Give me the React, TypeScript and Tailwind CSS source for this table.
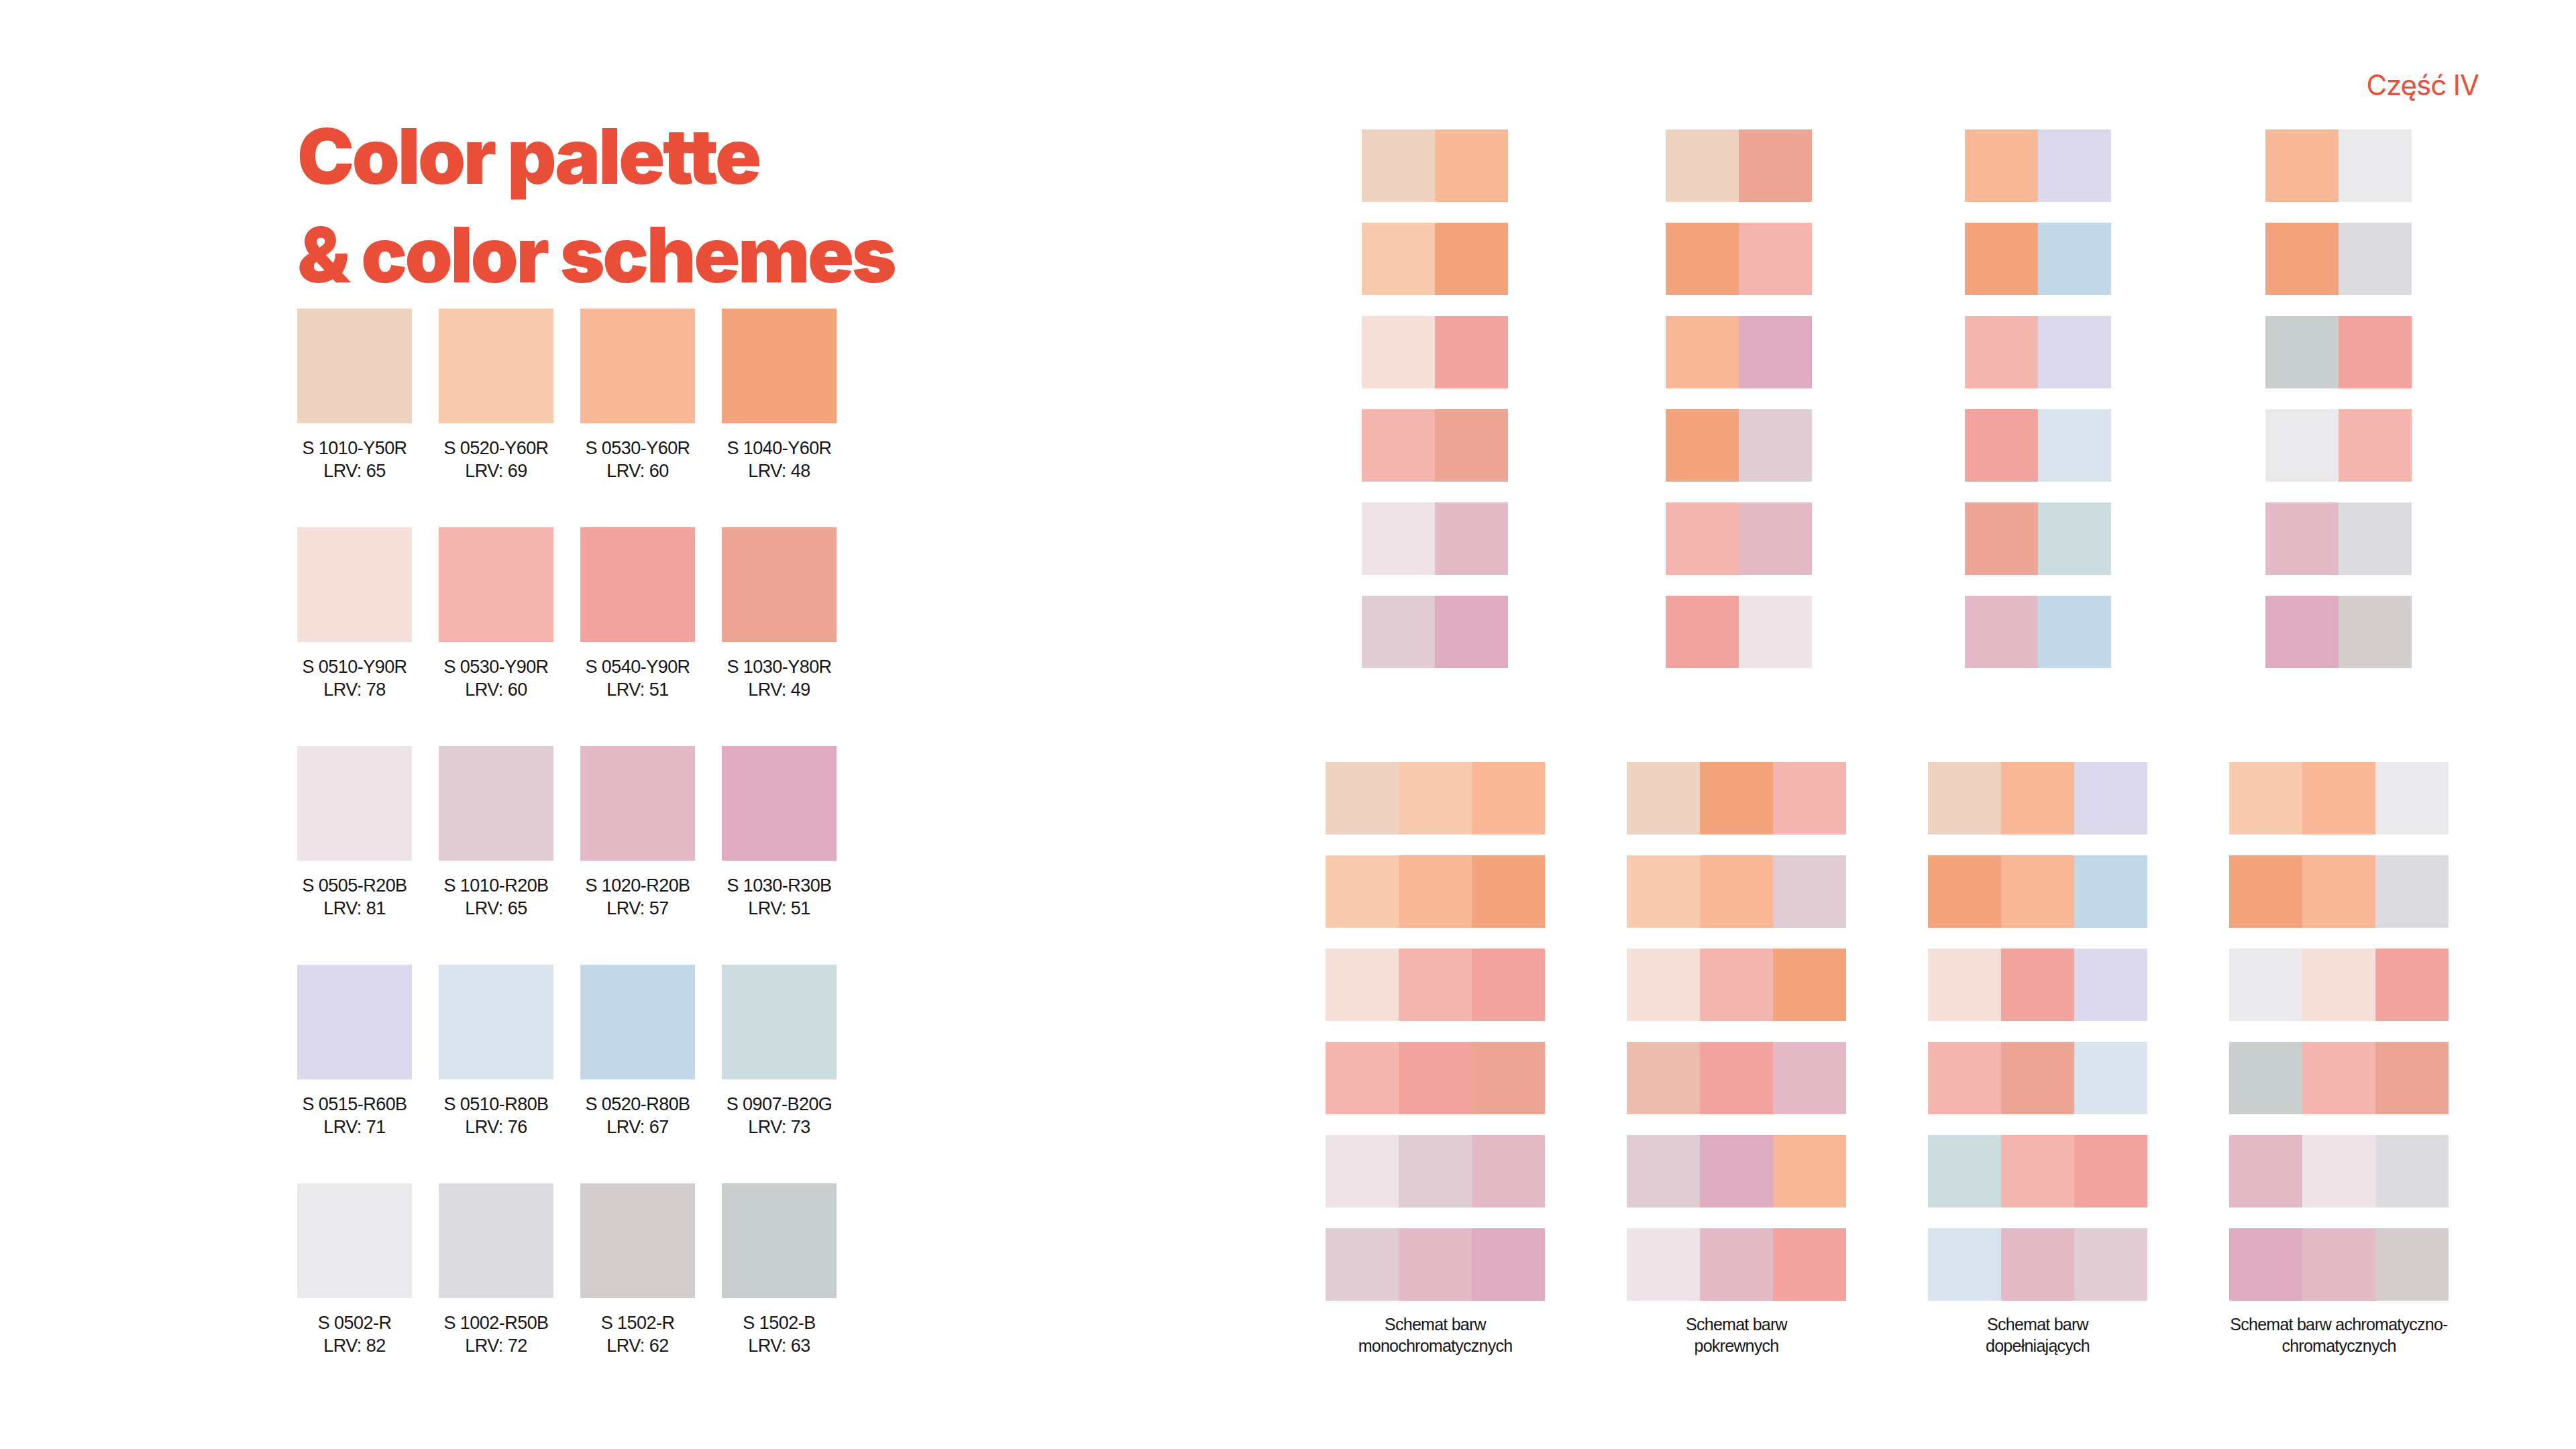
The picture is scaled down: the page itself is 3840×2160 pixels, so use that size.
import React from "react";

const C = {
  A1: "#efd2bf",
  A2: "#f9cbae",
  A3: "#f9b898",
  A4: "#f4a47c",
  B1: "#f6e0da",
  B2: "#f5b6b0",
  B3: "#f2a39d",
  B4: "#eda595",
  C1: "#eee3e7",
  C2: "#e0cdd3",
  C3: "#e3bac5",
  C4: "#dfacc1",
  D1: "#dcd9ed",
  D2: "#d9e3ed",
  D3: "#c2d7e8",
  D4: "#cddcdf",
  E1: "#eaeaec",
  E2: "#dcdbdf",
  E3: "#d4cdcd",
  E4: "#c9cfcf",
  X1: "#edbcad",
};

type Key = keyof typeof C;

const palette: { key: Key; code: string; lrv: number }[][] = [
  [
    { key: "A1", code: "S 1010-Y50R", lrv: 65 },
    { key: "A2", code: "S 0520-Y60R", lrv: 69 },
    { key: "A3", code: "S 0530-Y60R", lrv: 60 },
    { key: "A4", code: "S 1040-Y60R", lrv: 48 },
  ],
  [
    { key: "B1", code: "S 0510-Y90R", lrv: 78 },
    { key: "B2", code: "S 0530-Y90R", lrv: 60 },
    { key: "B3", code: "S 0540-Y90R", lrv: 51 },
    { key: "B4", code: "S 1030-Y80R", lrv: 49 },
  ],
  [
    { key: "C1", code: "S 0505-R20B", lrv: 81 },
    { key: "C2", code: "S 1010-R20B", lrv: 65 },
    { key: "C3", code: "S 1020-R20B", lrv: 57 },
    { key: "C4", code: "S 1030-R30B", lrv: 51 },
  ],
  [
    { key: "D1", code: "S 0515-R60B", lrv: 71 },
    { key: "D2", code: "S 0510-R80B", lrv: 76 },
    { key: "D3", code: "S 0520-R80B", lrv: 67 },
    { key: "D4", code: "S 0907-B20G", lrv: 73 },
  ],
  [
    { key: "E1", code: "S 0502-R", lrv: 82 },
    { key: "E2", code: "S 1002-R50B", lrv: 72 },
    { key: "E3", code: "S 1502-R", lrv: 62 },
    { key: "E4", code: "S 1502-B", lrv: 63 },
  ],
];

// pair columns, each with its own left spacing
const pairs: { ml: string; rows: Key[][] }[] = [
  {
    ml: "ml-0",
    rows: [["A1", "A3"], ["A2", "A4"], ["B1", "B3"], ["B2", "B4"], ["C1", "C3"], ["C2", "C4"]],
  },
  {
    ml: "ml-[235px]",
    rows: [["A1", "B4"], ["A4", "B2"], ["A3", "C4"], ["A4", "C2"], ["B2", "C3"], ["B3", "C1"]],
  },
  {
    ml: "ml-[228px]",
    rows: [["A3", "D1"], ["A4", "D3"], ["B2", "D1"], ["B3", "D2"], ["B4", "D4"], ["C3", "D3"]],
  },
  {
    ml: "ml-[230px]",
    rows: [["A3", "E1"], ["A4", "E2"], ["E4", "B3"], ["E1", "B2"], ["C3", "E2"], ["C4", "E3"]],
  },
];

const triples: { title: string; sub: string; rows: Key[][] }[] = [
  {
    title: "Schemat barw",
    sub: "monochromatycznych",
    rows: [
      ["A1", "A2", "A3"],
      ["A2", "A3", "A4"],
      ["B1", "B2", "B3"],
      ["B2", "B3", "B4"],
      ["C1", "C2", "C3"],
      ["C2", "C3", "C4"],
    ],
  },
  {
    title: "Schemat barw",
    sub: "pokrewnych",
    rows: [
      ["A1", "A4", "B2"],
      ["A2", "A3", "C2"],
      ["B1", "B2", "A4"],
      ["X1", "B3", "C3"],
      ["C2", "C4", "A3"],
      ["C1", "C3", "B3"],
    ],
  },
  {
    title: "Schemat barw",
    sub: "dopełniających",
    rows: [
      ["A1", "A3", "D1"],
      ["A4", "A3", "D3"],
      ["B1", "B3", "D1"],
      ["B2", "B4", "D2"],
      ["D4", "B2", "B3"],
      ["D2", "C3", "C2"],
    ],
  },
  {
    title: "Schemat barw achromatyczno-",
    sub: "chromatycznych",
    rows: [
      ["A2", "A3", "E1"],
      ["A4", "A3", "E2"],
      ["E1", "B1", "B3"],
      ["E4", "B2", "B4"],
      ["C3", "C1", "E2"],
      ["C4", "C3", "E3"],
    ],
  },
];

const Strip = ({ keys }: { keys: Key[] }) => (
  <div className="flex h-[108px]">
    {keys.map((k, i) => (
      <div key={i} className="w-[109px] h-full" style={{ backgroundColor: C[k] }} />
    ))}
  </div>
);

export default function App() {
  return (
    <div className="w-[3840px] h-[2160px] bg-white flex font-['Liberation_Sans',sans-serif] text-[#161616]">
      {/* left: palette */}
      <div className="w-[1500px] pl-[443px] pt-[159px] flex flex-col">
        <h1 className="font-['Inter',sans-serif] font-black text-[114px] leading-[147px] tracking-[-0.03em] text-[#e84e38]">
          Color palette
          <br />
          &amp; color schemes
        </h1>
        <div className="mt-[7px] flex flex-col gap-[67px]">
          {palette.map((row, ri) => (
            <div key={ri} className="flex gap-[40px]">
              {row.map((s) => (
                <div key={s.code} className="w-[171px] flex flex-col items-center">
                  <div className="w-[171px] h-[171px]" style={{ backgroundColor: C[s.key] }} />
                  <p className="mt-[20px] text-[27px] leading-[34px] text-center whitespace-nowrap tracking-[-0.02em]">
                    {s.code}
                    <br />
                    LRV: {s.lrv}
                  </p>
                </div>
              ))}
            </div>
          ))}
        </div>
      </div>

      {/* right: schemes */}
      <div className="flex-1 flex flex-col">
        <div className="flex justify-end pr-[145px] pt-[100px] h-[193px]">
          <span className="font-['Inter',sans-serif] text-[42px] leading-[54px] tracking-[-0.025em] text-[#e84e38]">
            Część IV
          </span>
        </div>

        <div className="pl-[530px] flex">
          {pairs.map((col, ci) => (
            <div key={ci} className={`${col.ml} flex flex-col gap-[31px]`}>
              {col.rows.map((p, pi) => (
                <Strip key={pi} keys={p} />
              ))}
            </div>
          ))}
        </div>

        <div className="mt-[140px] pl-[476px] flex gap-[122px]">
          {triples.map((col, ci) => (
            <div key={ci} className="w-[327px] flex flex-col items-center">
              <div className="flex flex-col gap-[31px]">
                {col.rows.map((r, ri) => (
                  <Strip key={ri} keys={r} />
                ))}
              </div>
              <p className="mt-[19px] text-[25px] leading-[32px] text-center whitespace-nowrap tracking-[-0.03em]">
                {col.title}
                <br />
                {col.sub}
              </p>
            </div>
          ))}
        </div>
      </div>
    </div>
  );
}
